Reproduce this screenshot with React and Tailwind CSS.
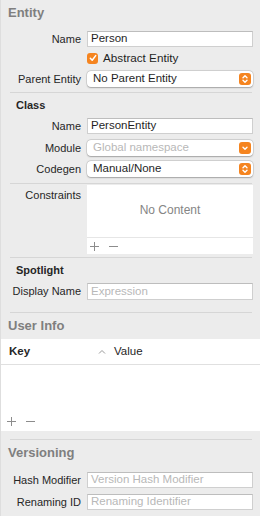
import React from "react";

const font = { fontFamily: '"Liberation Sans", Arial, sans-serif' };

function Stepper({ single }) {
  return (
    <span className="w-[12px] h-[12px] rounded-[3px] bg-[#f5841f] flex items-center justify-center">
      <svg width="8" height="10" viewBox="0 0 8 10" fill="none" stroke="white" strokeWidth="1.4" strokeLinecap="round" strokeLinejoin="round">
        {single ? (
          <path d="M2 4.2 L4 6.2 L6 4.2" />
        ) : (
          <>
            <path d="M2 3.8 L4 1.8 L6 3.8" />
            <path d="M2 6.2 L4 8.2 L6 6.2" />
          </>
        )}
      </svg>
    </span>
  );
}

function Row({ label, children, className = "" }) {
  return (
    <div className={"flex items-center h-[16px] " + className}>
      <div className="w-[80px] text-right text-[11px] text-[#262626] leading-none">{label}</div>
      <div className="ml-[6px] w-[166px] h-full">{children}</div>
    </div>
  );
}

function Field({ value, placeholder }) {
  return (
    <div className="h-full bg-white border border-[#cfcfcf] border-t-[#bdbdbd] flex items-center pl-[3px] text-[11.5px] leading-none">
      {value ? (
        <span className="text-[#1f1f1f]">{value}</span>
      ) : (
        <span className="text-[#b8b8b8]">{placeholder}</span>
      )}
    </div>
  );
}

function Popup({ value, placeholder, single }) {
  return (
    <div className="h-full bg-white rounded-[4px] shadow-[0_0_0_0.5px_rgba(0,0,0,0.15),0_0.5px_1.5px_rgba(0,0,0,0.25)] flex items-center justify-between pl-[6px] pr-[2px] text-[11.5px] leading-none">
      {value ? (
        <span className="text-[#1f1f1f]">{value}</span>
      ) : (
        <span className="text-[#b8b8b8]">{placeholder}</span>
      )}
      <Stepper single={single} />
    </div>
  );
}

function Sep() {
  return <div className="h-px bg-[#d6d6d6] ml-[9px] mr-[8px]" />;
}

function PlusMinus({ className = "" }) {
  return (
    <div className={"flex items-center gap-[10px] " + className}>
      <svg width="9" height="9" viewBox="0 0 9 9" stroke="#8c8c8c" strokeWidth="1">
        <path d="M4.5 0 V9 M0 4.5 H9" />
      </svg>
      <svg width="9" height="9" viewBox="0 0 9 9" stroke="#8c8c8c" strokeWidth="1">
        <path d="M0 4.5 H9" />
      </svg>
    </div>
  );
}

export default function App() {
  return (
    <div className="w-[260px] h-[516px] bg-[#ececec] border-l border-[#dedede] overflow-hidden" style={font}>
      {/* Entity */}
      <div className="h-[26px] flex items-center pl-[7px] text-[13px] font-bold text-[#7f7f7f]">Entity</div>
      <Row label="Name" className="mt-[5px]">
        <Field value="Person" />
      </Row>
      <div className="h-[16px] mt-[3px] flex items-center pl-[86px]">
        <span className="w-[11px] h-[11px] rounded-[3px] bg-[#f5841f] flex items-center justify-center">
          <svg width="8" height="8" viewBox="0 0 8 8" fill="none" stroke="white" strokeWidth="1.5" strokeLinecap="round" strokeLinejoin="round">
            <path d="M1.3 4.2 L3.2 6.2 L6.7 1.6" />
          </svg>
        </span>
        <span className="ml-[5px] text-[11.7px] text-[#1f1f1f] leading-none">Abstract Entity</span>
      </div>
      <Row label="Parent Entity" className="mt-[5px]">
        <Popup value="No Parent Entity" />
      </Row>
      <div className="mt-[5px]">
        <Sep />
      </div>

      {/* Class */}
      <div className="h-[24px] flex items-center pl-[15px] text-[11px] font-bold text-[#262626]">Class</div>
      <Row label="Name" className="mt-[1px]">
        <Field value="PersonEntity" />
      </Row>
      <Row label="Module" className="mt-[6px]">
        <Popup placeholder="Global namespace" single />
      </Row>
      <Row label="Codegen" className="mt-[5px]">
        <Popup value="Manual/None" />
      </Row>
      <div className="mt-[6px]">
        <Sep />
      </div>

      {/* Constraints */}
      <div className="flex mt-[1px]">
        <div className="w-[80px] text-right text-[11px] text-[#262626] pt-[5px] leading-none">Constraints</div>
        <div className="ml-[6px] w-[166px] h-[69px] bg-white flex flex-col">
          <div className="flex-1 flex items-center justify-center text-[12px] text-[#858585] pb-[2px]">No Content</div>
          <div className="h-px bg-[#e6e6e6]" />
          <PlusMinus className="h-[16px] pl-[3px]" />
        </div>
      </div>
      <div className="mt-[3px]">
        <Sep />
      </div>

      {/* Spotlight */}
      <div className="h-[24px] flex items-center pl-[15px] text-[11px] font-bold text-[#262626]">Spotlight</div>
      <Row label="Display Name" className="mt-[1px] h-[17px]">
        <Field placeholder="Expression" />
      </Row>
      <div className="mt-[12px]">
        <Sep />
      </div>

      {/* User Info */}
      <div className="h-[26px] flex items-center pl-[7px] text-[13px] font-bold text-[#7f7f7f]">User Info</div>
      <div className="bg-white h-[92px] flex flex-col">
        <div className="h-[26px] flex items-center border-b border-[#e0e0e0] text-[11.5px] text-[#262626]">
          <span className="pl-[8px] w-[97px] font-bold">Key</span>
          <svg width="8" height="6" viewBox="0 0 8 6" fill="none" stroke="#9a9a9a" strokeWidth="1">
            <path d="M1 4.5 L4 1.5 L7 4.5" />
          </svg>
          <span className="ml-[8px]">Value</span>
        </div>
        <div className="flex-1" />
        <PlusMinus className="h-[17px] pl-[6px] pb-[2px]" />
      </div>
      <div className="mt-[8px]">
        <Sep />
      </div>

      {/* Versioning */}
      <div className="h-[25px] flex items-center pl-[7px] text-[13px] font-bold text-[#7f7f7f]">Versioning</div>
      <Row label="Hash Modifier" className="mt-[7px]">
        <Field placeholder="Version Hash Modifier" />
      </Row>
      <Row label="Renaming ID" className="mt-[6px]">
        <Field placeholder="Renaming Identifier" />
      </Row>
    </div>
  );
}
